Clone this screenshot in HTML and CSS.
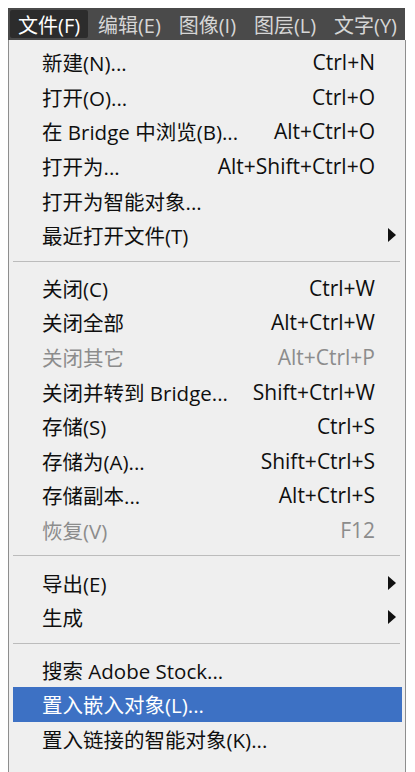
FILE: index.html
```html
<!DOCTYPE html>
<html lang="zh-CN">
<head>
    <meta charset="UTF-8">
    <meta name="viewport" content="width=device-width, initial-scale=1.0">
    <title>文件菜单</title>
    <link rel="stylesheet" href="styles.css">
</head>
<body>
    <div class="menubar">
        <span class="menubar-item active">文件(F)</span>
        <span class="menubar-item">编辑(E)</span>
        <span class="menubar-item">图像(I)</span>
        <span class="menubar-item">图层(L)</span>
        <span class="menubar-item">文字(Y)</span>
    </div>

    <div class="menu">
        <div class="item"><span class="label">新建(N)...</span><span class="key">Ctrl+N</span><span class="sub"></span></div>
        <div class="item"><span class="label">打开(O)...</span><span class="key">Ctrl+O</span><span class="sub"></span></div>
        <div class="item"><span class="label">在 Bridge 中浏览(B)...</span><span class="key">Alt+Ctrl+O</span><span class="sub"></span></div>
        <div class="item"><span class="label">打开为...</span><span class="key">Alt+Shift+Ctrl+O</span><span class="sub"></span></div>
        <div class="item"><span class="label">打开为智能对象...</span><span class="key"></span><span class="sub"></span></div>
        <div class="item"><span class="label">最近打开文件(T)</span><span class="key"></span><span class="sub"><i class="arrow"></i></span></div>

        <div class="separator"></div>

        <div class="item"><span class="label">关闭(C)</span><span class="key">Ctrl+W</span><span class="sub"></span></div>
        <div class="item"><span class="label">关闭全部</span><span class="key">Alt+Ctrl+W</span><span class="sub"></span></div>
        <div class="item disabled"><span class="label">关闭其它</span><span class="key">Alt+Ctrl+P</span><span class="sub"></span></div>
        <div class="item"><span class="label">关闭并转到 Bridge...</span><span class="key">Shift+Ctrl+W</span><span class="sub"></span></div>
        <div class="item"><span class="label">存储(S)</span><span class="key">Ctrl+S</span><span class="sub"></span></div>
        <div class="item"><span class="label">存储为(A)...</span><span class="key">Shift+Ctrl+S</span><span class="sub"></span></div>
        <div class="item"><span class="label">存储副本...</span><span class="key">Alt+Ctrl+S</span><span class="sub"></span></div>
        <div class="item disabled"><span class="label">恢复(V)</span><span class="key">F12</span><span class="sub"></span></div>

        <div class="separator"></div>

        <div class="item"><span class="label">导出(E)</span><span class="key"></span><span class="sub"><i class="arrow"></i></span></div>
        <div class="item"><span class="label">生成</span><span class="key"></span><span class="sub"><i class="arrow"></i></span></div>

        <div class="separator"></div>

        <div class="item"><span class="label">搜索 Adobe Stock...</span><span class="key"></span><span class="sub"></span></div>
        <div class="item selected"><span class="label">置入嵌入对象(L)...</span><span class="key"></span><span class="sub"></span></div>
        <div class="item"><span class="label">置入链接的智能对象(K)...</span><span class="key"></span><span class="sub"></span></div>
    </div>
</body>
</html>
```

FILE: styles.css
```css
body {
    font-family: 'Open Sans', 'Noto Sans CJK SC', sans-serif;
    font-size: 20.5px;
    margin: 0;
    padding: 8px 10px 0 8px;
    background-color: #ffffff;
    color: #0f0f0f;
}
.menubar {
    display: flex;
    align-items: center;
    justify-content: space-between;
    height: 32px;
    padding: 0 0 0 2px;
    background-color: #4a4a4a;
    font-size: 20px;
    overflow: hidden;
}
.menubar-item {
    display: flex;
    align-items: center;
    height: 28px;
    padding: 0 8px;
    border-radius: 2px;
    color: #d6d6d6;
    white-space: nowrap;
}
.menubar-item.active {
    background-color: #2c2c2c;
    color: #ffffff;
}
.menu {
    width: 398px;
    height: 732px;
    padding-top: 5px;
    box-sizing: border-box;
    background-color: #efefef;
    border-left: 1px solid #8e8e8e;
    border-right: 1px solid #8e8e8e;
}
.item {
    display: flex;
    align-items: center;
    height: 34.6px;
    margin: 0 3px 0 4px;
    padding: 0 6px 0 29px;
    white-space: nowrap;
}
.label {
    flex: 1;
}
.key {
    font-size: 21px;
    text-align: right;
}
.sub {
    display: flex;
    justify-content: flex-end;
    width: 21px;
}
.arrow {
    width: 0;
    height: 0;
    border-top: 7px solid transparent;
    border-bottom: 7px solid transparent;
    border-left: 8px solid #111111;
}
.disabled {
    color: #8c8c8c;
}
.selected {
    background-color: #3d71c4;
    color: #ffffff;
}
.separator {
    height: 1px;
    margin: 8px 5px 9px 4px;
    background-color: #bcbcbc;
}
```
